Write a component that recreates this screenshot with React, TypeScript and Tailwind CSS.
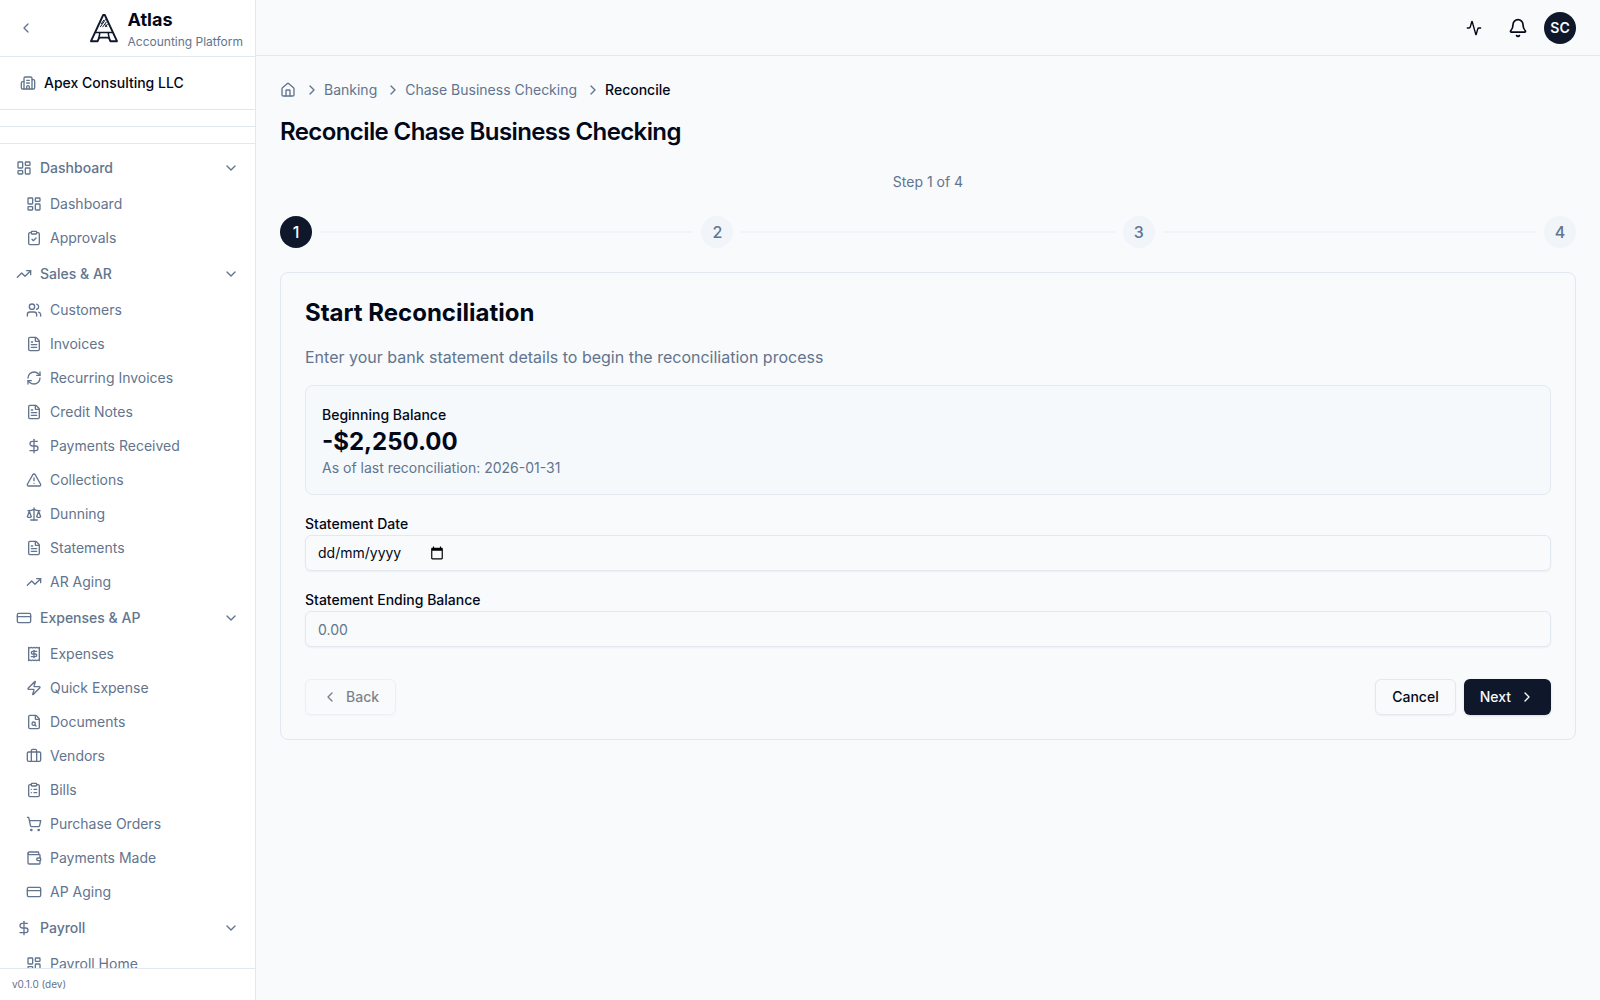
import type { ReactNode } from "react";
import {
  Activity,
  Bell,
  Briefcase,
  Building2,
  ChevronDown,
  ChevronLeft,
  ChevronRight,
  ClipboardCheck,
  ClipboardList,
  CreditCard,
  DollarSign,
  FileSearch,
  FileText,
  House,
  LayoutDashboard,
  Receipt,
  RefreshCw,
  Scale,
  ShoppingCart,
  TrendingUp,
  TriangleAlert,
  Users,
  Wallet,
  Zap,
  type LucideIcon,
} from "lucide-react";

type NavItem = { label: string; icon: LucideIcon };
type NavGroup = NavItem & { items: NavItem[] };

const navGroups: NavGroup[] = [
  {
    label: "Dashboard",
    icon: LayoutDashboard,
    items: [
      { label: "Dashboard", icon: LayoutDashboard },
      { label: "Approvals", icon: ClipboardCheck },
    ],
  },
  {
    label: "Sales & AR",
    icon: TrendingUp,
    items: [
      { label: "Customers", icon: Users },
      { label: "Invoices", icon: FileText },
      { label: "Recurring Invoices", icon: RefreshCw },
      { label: "Credit Notes", icon: FileText },
      { label: "Payments Received", icon: DollarSign },
      { label: "Collections", icon: TriangleAlert },
      { label: "Dunning", icon: Scale },
      { label: "Statements", icon: FileText },
      { label: "AR Aging", icon: TrendingUp },
    ],
  },
  {
    label: "Expenses & AP",
    icon: CreditCard,
    items: [
      { label: "Expenses", icon: Receipt },
      { label: "Quick Expense", icon: Zap },
      { label: "Documents", icon: FileSearch },
      { label: "Vendors", icon: Briefcase },
      { label: "Bills", icon: ClipboardList },
      { label: "Purchase Orders", icon: ShoppingCart },
      { label: "Payments Made", icon: Wallet },
      { label: "AP Aging", icon: CreditCard },
    ],
  },
  {
    label: "Payroll",
    icon: DollarSign,
    items: [{ label: "Payroll Home", icon: LayoutDashboard }],
  },
];

const steps = [1, 2, 3, 4];
const currentStep = 1;

function Logo() {
  return (
    <svg
      viewBox="0 0 32 32"
      className="h-8 w-8 text-slate-900"
      fill="none"
      stroke="currentColor"
      strokeLinejoin="round"
      strokeLinecap="round"
    >
      <path d="M15.2 3h1.6L29 29.2H22.4L20.8 25.6H11.2L9.6 29.2H3Z" strokeWidth="1.9" />
      <path d="M7.6 20.6H24.4M11.8 20.8L11 25.4M20.2 20.8L21 25.4" strokeWidth="1.5" />
      <path
        d="M12.4 14.8L17.4 7.6M14.8 14.8L18.4 10M17.4 14.8L19.4 12.2M16.6 12.2L19 14.8M13.4 11.6L15.6 8.4"
        strokeWidth="1"
      />
    </svg>
  );
}

function CalendarIcon() {
  return (
    <svg viewBox="0 0 24 24" className="h-3.5 w-3.5" fill="currentColor">
      <path d="M20 3h-1V1h-2v2H7V1H5v2H4c-1.1 0-2 .9-2 2v16c0 1.1.9 2 2 2h16c1.1 0 2-.9 2-2V5c0-1.1-.9-2-2-2zm0 18H4V8h16v13z" />
    </svg>
  );
}

function Sidebar() {
  return (
    <aside className="flex w-64 shrink-0 flex-col border-r border-slate-200 bg-white">
      <div className="flex items-center justify-between border-b border-slate-200 px-3 py-1.5">
        <button aria-label="Collapse sidebar" className="p-1.5 text-slate-500">
          <ChevronLeft className="h-4 w-4" />
        </button>
        <div className="flex items-center gap-2">
          <Logo />
          <div>
            <p className="text-lg/7 font-bold">Atlas</p>
            <p className="text-xs text-slate-500">Accounting Platform</p>
          </div>
        </div>
      </div>

      <div className="flex items-center gap-2 border-b border-slate-200 px-5 py-4 text-sm font-medium">
        <Building2 className="h-4 w-4 text-slate-500" />
        Apex Consulting LLC
      </div>
      <div className="border-b border-slate-200 p-2" />
      <div className="border-b border-slate-200 p-2" />

      <nav className="flex min-h-0 flex-1 flex-col gap-1 overflow-y-auto p-2 text-sm text-slate-500 [scrollbar-width:none]">
        {navGroups.map((group) => (
          <div key={group.label} className="flex shrink-0 flex-col gap-1">
            <button className="flex h-8 items-center gap-2 px-2 font-medium">
              <group.icon className="h-4 w-4" />
              {group.label}
              <ChevronDown className="ml-auto h-4 w-4" />
            </button>
            <ul className="flex flex-col gap-0.5 px-2.5">
              {group.items.map((item) => (
                <li key={item.label}>
                  <a href="#" className="flex h-8 items-center gap-2 px-2">
                    <item.icon className="h-4 w-4" />
                    {item.label}
                  </a>
                </li>
              ))}
            </ul>
          </div>
        ))}
      </nav>

      <div className="border-t border-slate-200 px-3 py-2 text-[10px]/[15px] text-slate-500">
        v0.1.0 (dev)
      </div>
    </aside>
  );
}

function Header() {
  return (
    <header className="flex h-14 shrink-0 items-center justify-end gap-2 border-b border-slate-200 px-6">
      <button aria-label="Activity" className="flex h-9 w-9 items-center justify-center">
        <Activity className="h-4 w-4" />
      </button>
      <button aria-label="Notifications" className="flex h-9 w-9 items-center justify-center">
        <Bell className="h-5 w-5" />
      </button>
      <button className="flex h-8 w-8 items-center justify-center rounded-full bg-slate-900 text-sm font-semibold text-slate-50">
        SC
      </button>
    </header>
  );
}

function Crumb({ children }: { children: ReactNode }) {
  return (
    <li className="flex items-center gap-1">
      <ChevronRight className="h-4 w-4" />
      {children}
    </li>
  );
}

function Breadcrumbs() {
  return (
    <nav aria-label="Breadcrumb">
      <ol className="flex items-center gap-2 text-sm text-slate-500">
        <li>
          <a href="#" aria-label="Home">
            <House className="h-4 w-4" />
          </a>
        </li>
        <Crumb>
          <a href="#">Banking</a>
        </Crumb>
        <Crumb>
          <a href="#">Chase Business Checking</a>
        </Crumb>
        <Crumb>
          <span className="font-medium text-[#020817]">Reconcile</span>
        </Crumb>
      </ol>
    </nav>
  );
}

function Stepper() {
  return (
    <div className="flex items-center gap-2">
      {steps.map((step) => (
        <div key={step} className="contents">
          {step > 1 && <div className="h-0.5 flex-1 bg-slate-100" />}
          <div
            className={`flex h-8 w-8 items-center justify-center rounded-full font-medium ${
              step === currentStep ? "bg-slate-900 text-slate-50" : "bg-slate-100 text-slate-500"
            }`}
          >
            {step}
          </div>
        </div>
      ))}
    </div>
  );
}

function ReconcileForm() {
  return (
    <form className="rounded-lg border border-slate-200 p-6">
      <div className="flex flex-col gap-4">
        <h2 className="text-2xl font-bold">Start Reconciliation</h2>
        <p className="text-slate-500">
          Enter your bank statement details to begin the reconciliation process
        </p>

        <div className="rounded-lg border border-slate-200 bg-[#f5f9fc] p-4">
          <div>
            <span className="text-sm font-medium">Beginning Balance</span>
          </div>
          <p className="text-2xl font-bold">-$2,250.00</p>
          <p className="text-sm text-slate-500">As of last reconciliation: 2026-01-31</p>
        </div>

        <div>
          <label htmlFor="statement-date" className="text-sm font-medium">
            Statement Date
          </label>
          <div className="flex h-9 items-center rounded-md border border-slate-200 px-3 shadow-xs">
            <input
              id="statement-date"
              type="text"
              inputMode="numeric"
              placeholder="dd/mm/yyyy"
              className="w-28 text-sm outline-none placeholder:text-[#020817]"
            />
            <button type="button" aria-label="Open calendar" className="text-black">
              <CalendarIcon />
            </button>
          </div>
        </div>

        <div>
          <label htmlFor="ending-balance" className="text-sm font-medium">
            Statement Ending Balance
          </label>
          <input
            id="ending-balance"
            type="text"
            inputMode="decimal"
            placeholder="0.00"
            className="block h-9 w-full rounded-md border border-slate-200 px-3 py-1 text-sm shadow-xs placeholder:text-slate-500"
          />
        </div>
      </div>

      {/* Actions */}
      <div className="mt-8 flex justify-between text-sm font-medium">
        <button
          type="button"
          disabled
          className="flex h-9 items-center gap-2 rounded-md border border-slate-200 px-4 opacity-50 shadow-xs"
        >
          <ChevronLeft className="h-4 w-4" />
          Back
        </button>
        <div className="flex gap-2">
          <button type="button" className="h-9 rounded-md border border-slate-200 px-4 shadow-xs">
            Cancel
          </button>
          <button
            type="button"
            className="flex h-9 items-center gap-2 rounded-md bg-slate-900 px-4 text-slate-50 shadow-sm"
          >
            Next
            <ChevronRight className="h-4 w-4" />
          </button>
        </div>
      </div>
    </form>
  );
}

export default function App() {
  return (
    <div className="flex h-screen bg-slate-50 font-['Inter',sans-serif] text-[#020817]">
      <Sidebar />
      <div className="flex min-w-0 flex-1 flex-col">
        <Header />
        <main className="flex flex-1 flex-col gap-6 overflow-auto p-6">
          <div className="flex flex-col gap-4">
            <Breadcrumbs />
            <h1 className="text-2xl font-semibold tracking-tight">
              Reconcile Chase Business Checking
            </h1>
          </div>
          <p className="text-center text-sm text-slate-500">Step {currentStep} of 4</p>
          <Stepper />
          <ReconcileForm />
        </main>
      </div>
    </div>
  );
}
